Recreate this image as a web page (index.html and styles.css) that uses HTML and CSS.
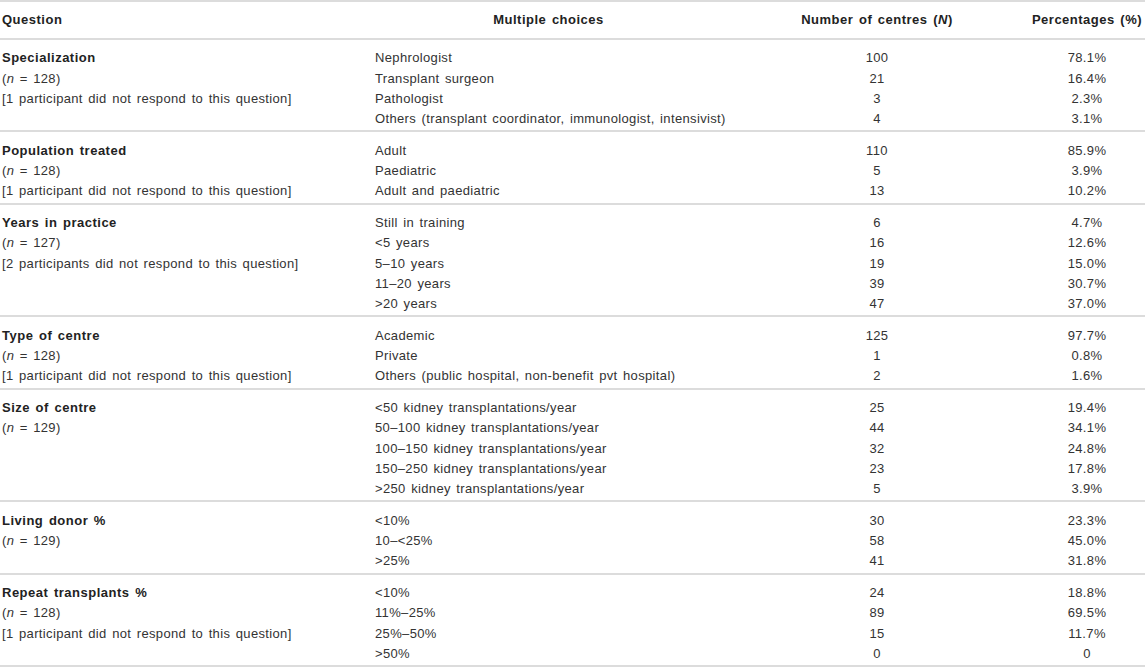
FILE: index.html
```html
<!DOCTYPE html>
<html lang="en">
<head>
<meta charset="utf-8">
<title>Survey table</title>
<link rel="stylesheet" href="styles.css">
</head>
<body>
<table class="tbl">
  <colgroup>
    <col class="c-q">
    <col class="c-mc">
    <col class="c-n">
    <col class="c-p">
  </colgroup>
  <thead>
    <tr>
      <th class="left">Question</th>
      <th>Multiple choices</th>
      <th>Number of centres (<i>N</i>)</th>
      <th>Percentages (%)</th>
    </tr>
  </thead>
  <tbody>
    <tr>
      <td class="q"><div class="b">Specialization</div><div>(<i>n</i> = 128)</div><div>[1 participant did not respond to this question]</div></td>
      <td class="mc"><div>Nephrologist</div><div>Transplant surgeon</div><div>Pathologist</div><div>Others (transplant coordinator, immunologist, intensivist)</div></td>
      <td class="num"><div>100</div><div>21</div><div>3</div><div>4</div></td>
      <td class="num"><div>78.1%</div><div>16.4%</div><div>2.3%</div><div>3.1%</div></td>
    </tr>
    <tr>
      <td class="q"><div class="b">Population treated</div><div>(<i>n</i> = 128)</div><div>[1 participant did not respond to this question]</div></td>
      <td class="mc"><div>Adult</div><div>Paediatric</div><div>Adult and paediatric</div></td>
      <td class="num"><div>110</div><div>5</div><div>13</div></td>
      <td class="num"><div>85.9%</div><div>3.9%</div><div>10.2%</div></td>
    </tr>
    <tr>
      <td class="q"><div class="b">Years in practice</div><div>(<i>n</i> = 127)</div><div>[2 participants did not respond to this question]</div></td>
      <td class="mc"><div>Still in training</div><div>&lt;5 years</div><div>5–10 years</div><div>11–20 years</div><div>&gt;20 years</div></td>
      <td class="num"><div>6</div><div>16</div><div>19</div><div>39</div><div>47</div></td>
      <td class="num"><div>4.7%</div><div>12.6%</div><div>15.0%</div><div>30.7%</div><div>37.0%</div></td>
    </tr>
    <tr>
      <td class="q"><div class="b">Type of centre</div><div>(<i>n</i> = 128)</div><div>[1 participant did not respond to this question]</div></td>
      <td class="mc"><div>Academic</div><div>Private</div><div>Others (public hospital, non-benefit pvt hospital)</div></td>
      <td class="num"><div>125</div><div>1</div><div>2</div></td>
      <td class="num"><div>97.7%</div><div>0.8%</div><div>1.6%</div></td>
    </tr>
    <tr>
      <td class="q"><div class="b">Size of centre</div><div>(<i>n</i> = 129)</div></td>
      <td class="mc"><div>&lt;50 kidney transplantations/year</div><div>50–100 kidney transplantations/year</div><div>100–150 kidney transplantations/year</div><div>150–250 kidney transplantations/year</div><div>&gt;250 kidney transplantations/year</div></td>
      <td class="num"><div>25</div><div>44</div><div>32</div><div>23</div><div>5</div></td>
      <td class="num"><div>19.4%</div><div>34.1%</div><div>24.8%</div><div>17.8%</div><div>3.9%</div></td>
    </tr>
    <tr>
      <td class="q"><div class="b">Living donor %</div><div>(<i>n</i> = 129)</div></td>
      <td class="mc"><div>&lt;10%</div><div>10–&lt;25%</div><div>&gt;25%</div></td>
      <td class="num"><div>30</div><div>58</div><div>41</div></td>
      <td class="num"><div>23.3%</div><div>45.0%</div><div>31.8%</div></td>
    </tr>
    <tr>
      <td class="q"><div class="b">Repeat transplants %</div><div>(<i>n</i> = 128)</div><div>[1 participant did not respond to this question]</div></td>
      <td class="mc"><div>&lt;10%</div><div>11%–25%</div><div>25%–50%</div><div>&gt;50%</div></td>
      <td class="num"><div>24</div><div>89</div><div>15</div><div>0</div></td>
      <td class="num"><div>18.8%</div><div>69.5%</div><div>11.7%</div><div>0</div></td>
    </tr>
  </tbody>
</table>
</body>
</html>
```

FILE: styles.css
```css
html, body {
  margin: 0;
  padding: 0;
  background: #ffffff;
}

body {
  font-family: "Liberation Sans", Arial, Helvetica, sans-serif;
  font-size: 13px;
  color: #333333;
  letter-spacing: 0.35px;
  word-spacing: 1.5px;
}

.tbl {
  width: 1145px;
  border-collapse: collapse;
  table-layout: fixed;
}

.c-q { width: 372px; }
.c-mc { width: 353px; }
.c-n { width: 304px; }
.c-p { width: 116px; }

.tbl th {
  font-weight: bold;
  color: #222222;
  letter-spacing: 0.5px;
  text-align: center;
  line-height: 20px;
  padding: 8px 0 8px 0;
  border-top: 2px solid #dcdcdc;
  border-bottom: 2px solid #dcdcdc;
  white-space: nowrap;
}

.tbl th.left {
  text-align: left;
  padding-left: 2px;
}

.tbl td {
  vertical-align: top;
  line-height: 20.3px;
  padding: 8.3px 0 1px 0;
  border-bottom: 2px solid #dcdcdc;
  white-space: nowrap;
}

.tbl td.q {
  padding-left: 2px;
}

.tbl td.mc {
  padding-left: 3px;
}

.tbl td.num {
  text-align: center;
}

.b {
  font-weight: bold;
  color: #222222;
  letter-spacing: 0.5px;
}
```
